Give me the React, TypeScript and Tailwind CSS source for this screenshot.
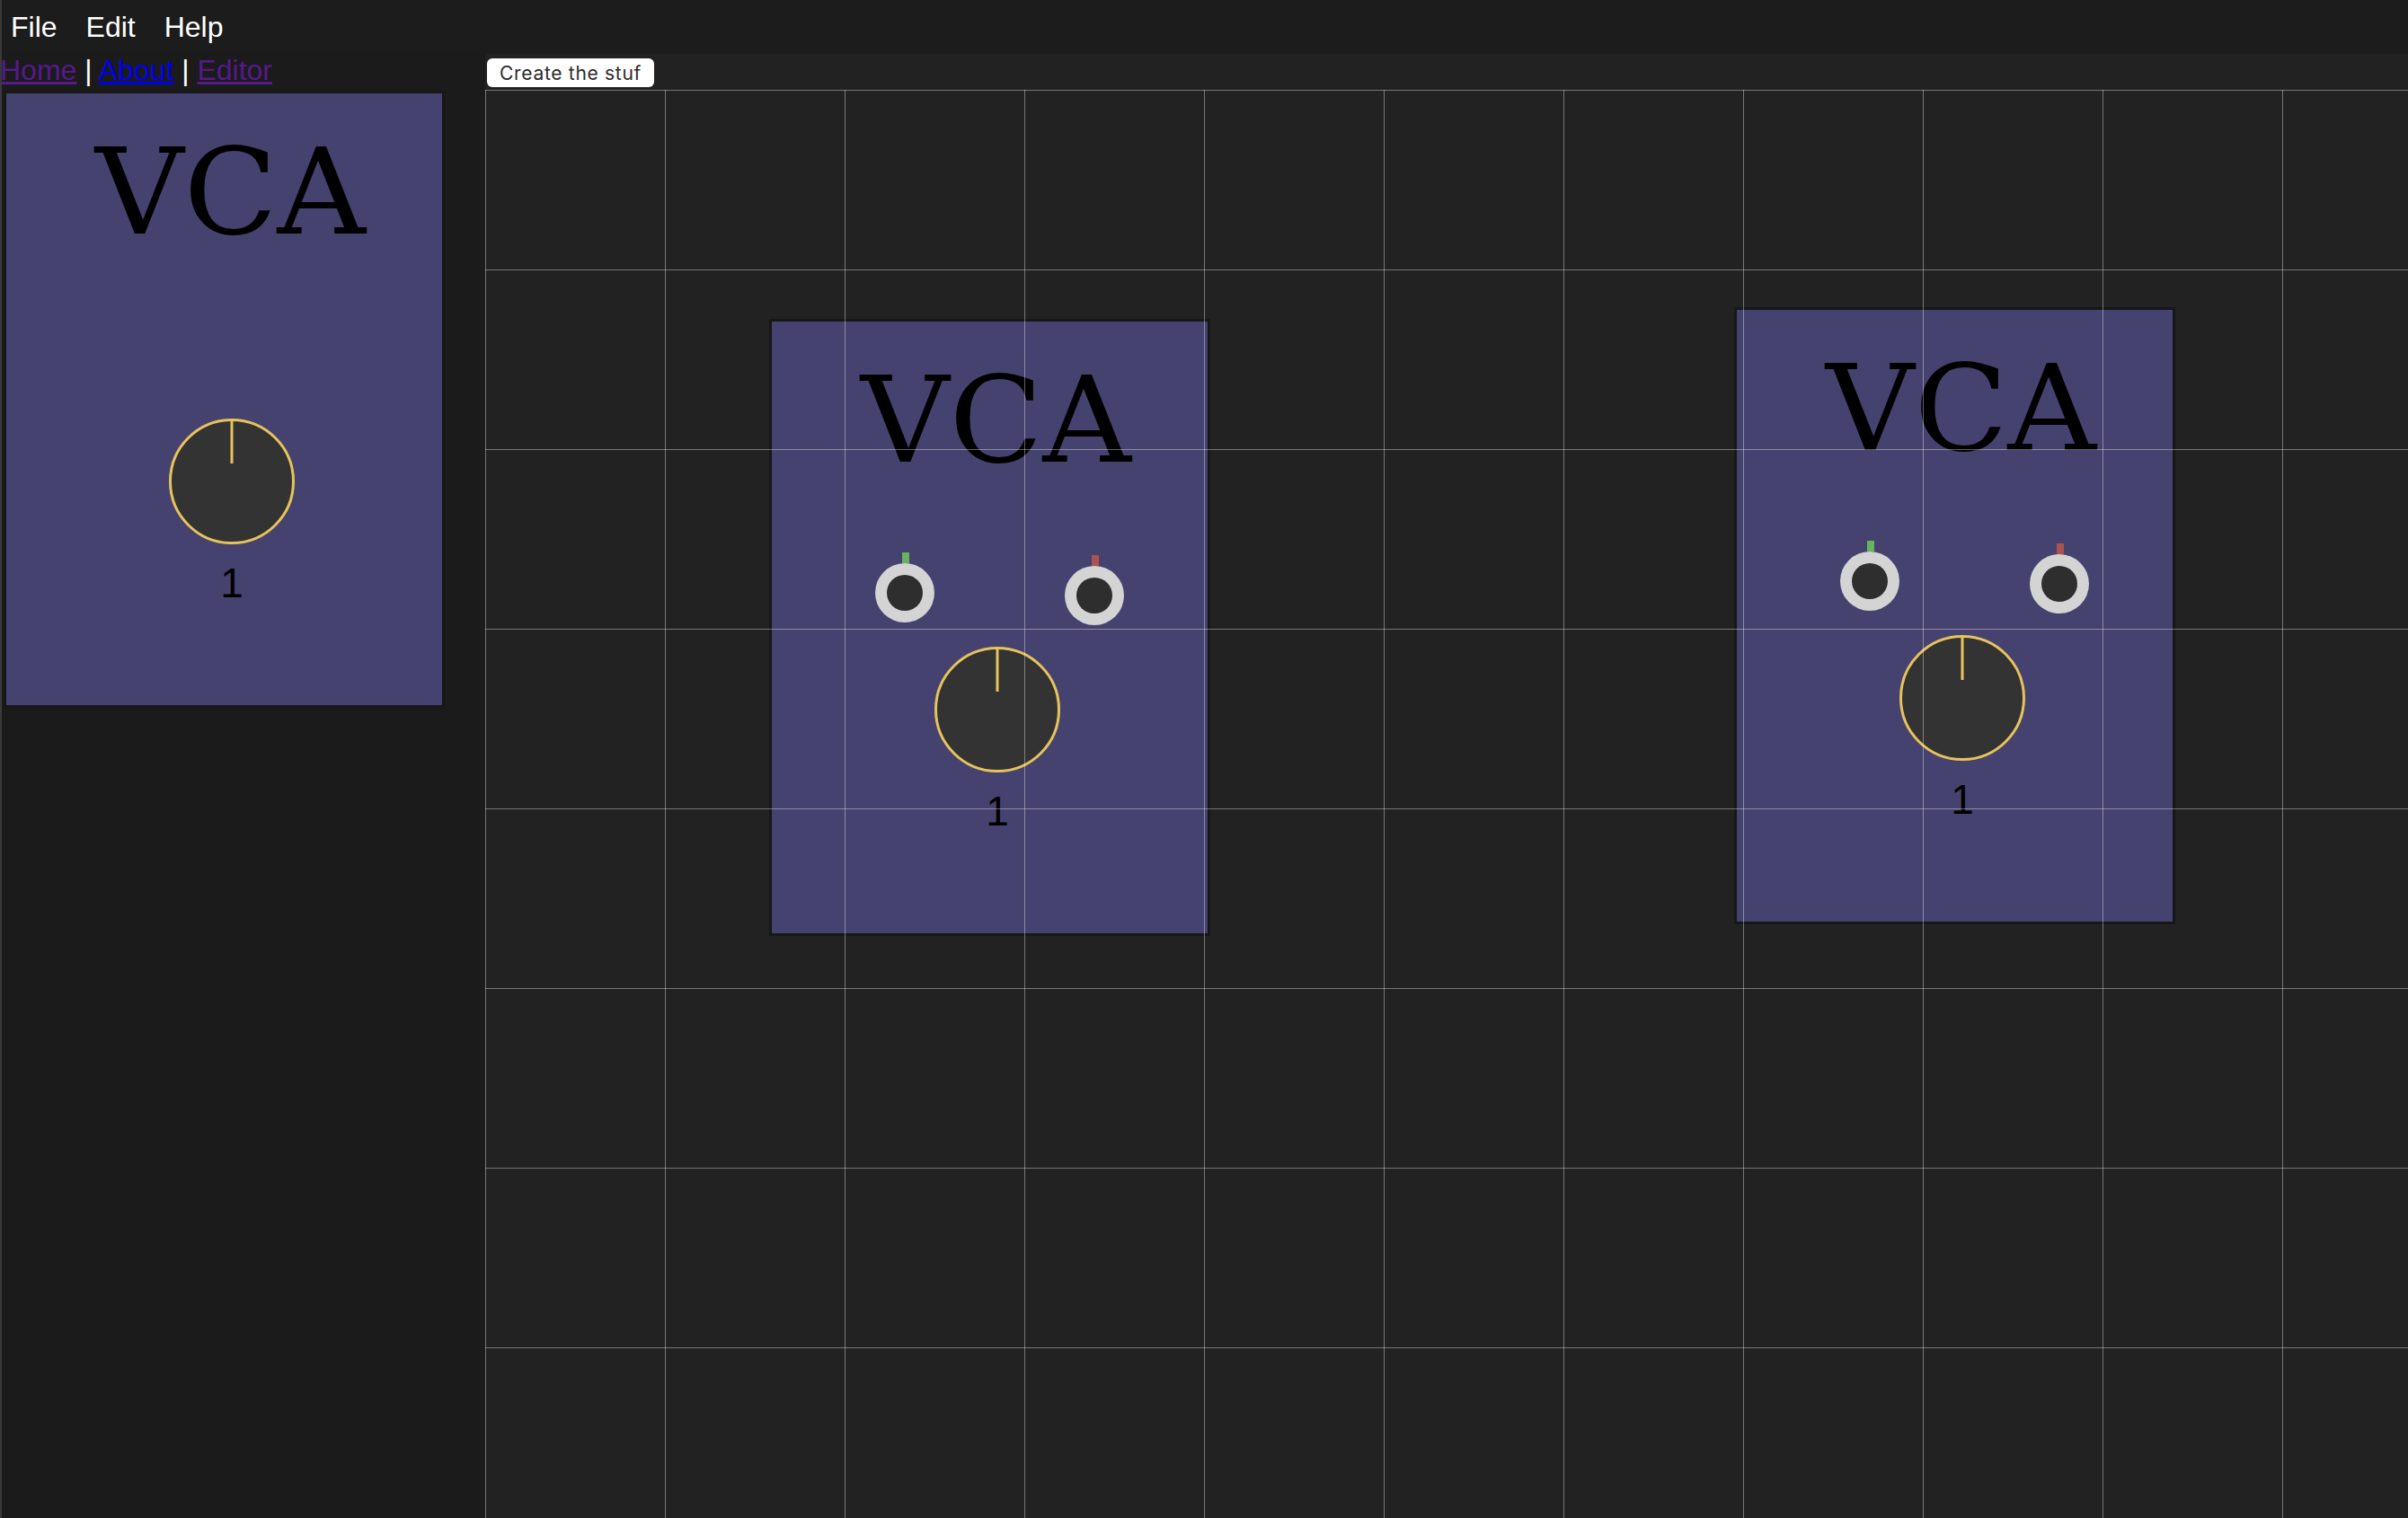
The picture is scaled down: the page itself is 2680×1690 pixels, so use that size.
import React from "react";

const KNOB = "#e6c35c";

function Jack({ cx, cy, tab }: { cx: number; cy: number; tab: string }) {
  return (
    <g>
      <rect x={cx - 3} y={cy - 45} width={8} height={12} fill={tab} />
      <circle cx={cx} cy={cy} r={33} fill="#d4d4d4" />
      <circle cx={cx} cy={cy} r={20} fill="#2e2e2e" />
    </g>
  );
}

function VcaModule({ jacks = false, className = "" }: { jacks?: boolean; className?: string }) {
  return (
    <div className={`h-[687px] w-[491px] border-[3px] border-[#171717] bg-[#46426f] ${className}`}>
      <svg width={485} height={681} viewBox="0 0 485 681">
        <text
          x={99}
          y={156}
          fontSize={133}
          textLength={301}
          lengthAdjust="spacingAndGlyphs"
          fontFamily="'DejaVu Serif', serif"
          fill="#000"
        >
          VCA
        </text>
        {jacks && (
          <>
            <Jack cx={148} cy={302} tab="#6ab35e" />
            <Jack cx={359} cy={305} tab="#a85550" />
          </>
        )}
        <circle cx={251} cy={432} r={68.5} fill="#333333" stroke={KNOB} strokeWidth={3} />
        <line x1={251} y1={365} x2={251} y2={412} stroke={KNOB} strokeWidth={3} />
        <text
          x={251}
          y={561}
          fontSize={46}
          textAnchor="middle"
          fontFamily="'Liberation Sans', Arial, sans-serif"
          fill="#000"
        >
          1
        </text>
      </svg>
    </div>
  );
}

export default function App() {
  return (
    <div className="relative flex h-screen flex-col overflow-hidden bg-[#1b1b1b] font-['Liberation_Sans',Arial,sans-serif]">
      {/* window edge */}
      <div className="pointer-events-none absolute left-0 top-0 z-10 h-full w-[2px] bg-[#3a3a3a]" />

      <header className="flex h-[60px] shrink-0 items-center gap-[32px] bg-[#1c1c1c] pl-[12px] text-[32px] text-white">
        <span>File</span>
        <span>Edit</span>
        <span>Help</span>
      </header>

      <div className="flex flex-1">
        <aside className="flex w-[540px] shrink-0 flex-col bg-[#1b1b1b]">
          <nav className="text-[32px] leading-[37px] text-white">
            <a href="#" className="text-[#551a8b] underline">Home</a>
            {" | "}
            <a href="#" className="text-[#0000ee] underline">About</a>
            {" | "}
            <a href="#" className="text-[#551a8b] underline">Editor</a>
          </nav>
          <VcaModule className="ml-[4px] mt-[4px]" />
        </aside>

        <main className="flex flex-1 flex-col bg-[#222222]">
          <div className="flex h-[40px] shrink-0 items-start pl-[2px] pt-[5px]">
            <button className="flex h-[32px] items-center rounded-[6px] bg-white px-[14px] font-['Inter',sans-serif] text-[21px] leading-none tracking-[0.7px] text-[#2b2b2b]">
              Create the stuf
            </button>
          </div>
          <div className="relative flex-1 overflow-hidden">
            <VcaModule jacks className="absolute left-[316px] top-[255px]" />
            <VcaModule jacks className="absolute left-[1390px] top-[242px]" />
            <div className="pointer-events-none absolute inset-0 bg-[linear-gradient(to_right,rgba(255,255,255,0.38)_1px,transparent_1px),linear-gradient(to_bottom,rgba(255,255,255,0.38)_1px,transparent_1px)] bg-size-[200px_200px]" />
          </div>
        </main>
      </div>
    </div>
  );
}
